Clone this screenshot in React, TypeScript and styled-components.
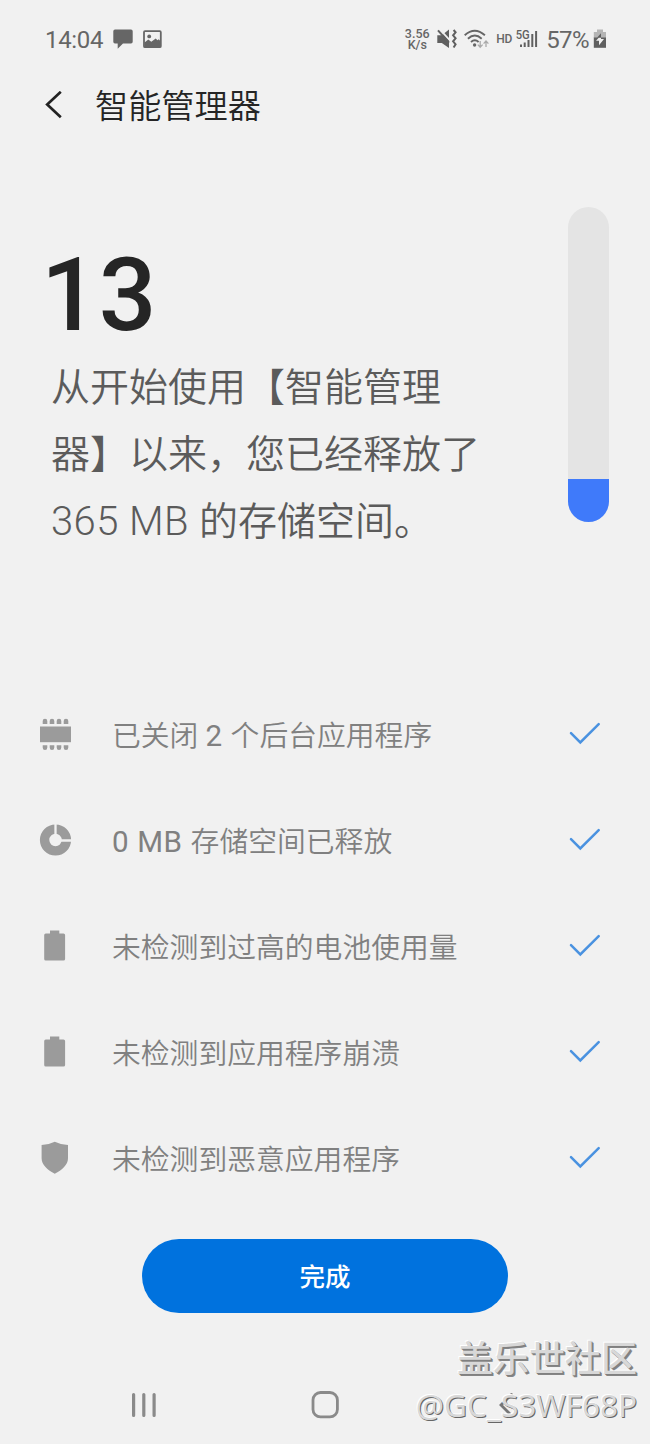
import React from "react";
import styled, { createGlobalStyle } from "styled-components";

const GlobalStyle = createGlobalStyle`
  * { box-sizing: border-box; }
  body { margin: 0; background: #f1f1f1; }
`;

const Screen = styled.div`
  position: relative;
  display: flex;
  flex-direction: column;
  width: 650px;
  height: 1444px;
  overflow: hidden;
  background: #f1f1f1;
  color: #252525;
  font-family: Roboto, "Noto Sans CJK SC", sans-serif;
  white-space: nowrap;
`;

const StatusBar = styled.header`
  display: flex;
  align-items: center;
  justify-content: space-between;
  height: 78px;
  padding: 0 43px 0 45px;
  color: #666;
`;

const StatusGroup = styled.div`
  display: flex;
  align-items: center;
`;

const Clock = styled.span`
  margin-right: 10px;
  font-size: 24px;
  line-height: 28px;
  letter-spacing: -0.35px;
  padding-top: 2px;
`;

const NetSpeed = styled.span`
  display: flex;
  flex-direction: column;
  width: 26px;
  margin-right: 7px;
  font-size: 12.5px;
  font-weight: 500;
  line-height: 11px;
  text-align: center;
`;

const HdLabel = styled.span`
  width: 17px;
  margin: 0 3px 0 7px;
  font-size: 12px;
  font-weight: 500;
  line-height: 14px;
  letter-spacing: -0.2px;
`;

const Battery = styled.span`
  margin: 2px 4px 0 8px;
  font-size: 24px;
  line-height: 28px;
  letter-spacing: -0.6px;
`;

const TitleBar = styled.div`
  display: flex;
  align-items: center;
  height: 54px;
  padding-left: 44px;
`;

const Title = styled.h1`
  margin: 0 0 0 31px;
  padding-bottom: 3px;
  font-family: "Noto Sans CJK SC", sans-serif;
  font-size: 33.2px;
  font-weight: 350;
  line-height: 48px;
`;

const Summary = styled.section`
  display: flex;
  justify-content: space-between;
  height: 550px;
  padding: 75px 41px 0 44px;
`;

const Score = styled.div`
  height: 148px;
  margin-left: -3px;
  padding-top: 28px;
  font-size: 101.5px;
  font-weight: 500;
  line-height: 121px;
`;

const Message = styled.p`
  margin: 0 0 0 7px;
  color: #5b5b5b;
  font-size: 39px;
  font-weight: 350;
  line-height: 67px;
`;

const Amount = styled.span`
  font-size: 40px;
  font-weight: 300;
  line-height: 1;
  letter-spacing: 0.4px;
`;

const Meter = styled.div`
  display: flex;
  flex-direction: column;
  justify-content: flex-end;
  width: 41px;
  height: 315px;
  overflow: hidden;
  border-radius: 21px;
  background: #e4e4e4;
`;

const MeterFill = styled.div`
  height: 43px;
  background: #3f7afa;
`;

const Results = styled.ul`
  margin: 0;
  padding: 0;
  list-style: none;
`;

const ResultRow = styled.li`
  display: flex;
  align-items: center;
  height: 106px;
  padding: 0 48px 0 39px;

  svg {
    margin-bottom: 3px;
  }
`;

const ResultText = styled.span`
  flex: 1;
  margin-left: 40px;
  padding-top: 2px;
  color: #808080;
  font-size: 28.8px;
  font-weight: 350;
  line-height: 42px;
`;

const Count = styled.span`
  font-size: 29.6px;
  font-weight: 400;
  line-height: 1;
  letter-spacing: 0.6px;
`;

const DoneButton = styled.button`
  align-self: center;
  width: 366px;
  height: 74px;
  margin-top: 27px;
  padding: 2px 0 0;
  border: 0;
  border-radius: 37px;
  background: #0072de;
  color: #fff;
  font-family: inherit;
  font-size: 25.5px;
  font-weight: 500;
  line-height: 38px;
`;

const NavBar = styled.nav`
  display: grid;
  grid-template-columns: 181px 181px 181px;
  justify-content: center;
  justify-items: center;
  align-items: center;
  height: 78px;
  margin-top: 53px;
`;

const Watermark = styled.div`
  position: absolute;
  right: 13px;
  bottom: 17px;
  color: #d8d8d8;
  text-align: right;
  font-family: "Noto Sans", "Noto Sans CJK SC", sans-serif;
`;

const CommunityName = styled.div`
  font-size: 36px;
  font-weight: 500;
  line-height: 49px;
  text-shadow: 1px 1px 0 #808080, 2px 2px 0 #858585, -1px -1px 0 #fff;
`;

const UserName = styled.div`
  font-size: 31.5px;
  line-height: 44px;
  text-shadow: 1px 1px 0 #666, -1px -1px 0 #fff;
`;

const ChatIcon = () => (
  <svg width="20" height="20" viewBox="0 0 20 20" fill="#666">
    <path d="M2 0.5h16a1.7 1.7 0 0 1 1.7 1.7v10.6a1.7 1.7 0 0 1-1.7 1.7H10L4.7 19.8v-5.3H2a1.7 1.7 0 0 1-1.7-1.7V2.2A1.7 1.7 0 0 1 2 .5z" />
  </svg>
);

const PhotoIcon = () => (
  <svg width="29" height="19" viewBox="-10 0 29 19">
    <rect x="1" y="1.2" width="16.8" height="16" rx="1" fill="none" stroke="#666" strokeWidth="1.8" />
    <circle cx="6.2" cy="6.4" r="1.9" fill="#666" />
    <path d="M1.5 17v-4.6l3.8-3 3 2.4 4.4-3.2 1.8 1.6 1.2-1 2.2 2.2v5.6z" fill="#666" />
  </svg>
);

const MuteIcon = () => (
  <svg width="20" height="20" viewBox="0 0 20 20">
    <path d="M0.3 6.3h4.5L12 0.4V19l-7.2-5H0.3z" fill="#606060" />
    <path d="M2.4 0l11 11.8" stroke="#f1f1f1" strokeWidth="1.8" />
    <path d="M1 1.4l11 12.2" stroke="#606060" strokeWidth="2" />
    <path d="M16.6 1l2 2.3-2.5 3 2.5 3-2.5 3 2.5 3-2 3.2" fill="none" stroke="#606060" strokeWidth="2" />
  </svg>
);

const WifiIcon = () => (
  <svg width="32" height="20" viewBox="-7 0 32 20">
    <g fill="none" stroke="#666" strokeWidth="1.9">
      <path d="M0.7 6.2Q10.7-2.8 20.9 6.2" />
      <path d="M3.9 9.7Q10.8 3.5 17.7 9.7" />
      <path d="M7 13Q10.8 9.6 14.6 13" />
    </g>
    <circle cx="10.6" cy="16" r="1.7" fill="#666" />
    <path d="M16.2 12v6m-2.4-2.4 2.4 2.6 2.4-2.6M22 18v-6m-2.4 2.6L22 12l2.4 2.6" fill="none" stroke="#aaa" strokeWidth="1.3" />
  </svg>
);

const SignalIcon = () => (
  <svg width="22" height="20" viewBox="0 0 22 20">
    <text x="-0.3" y="10" fill="#606060" fontFamily="Roboto" fontSize="12" fontWeight="500" textLength="14" lengthAdjust="spacingAndGlyphs">5G</text>
    <path d="M5 15.5V18M8.7 13.5V18M12.5 11V18M16.3 5V18M20.1 2V18" stroke="#606060" strokeWidth="2" />
  </svg>
);

const ChargeIcon = () => (
  <svg width="14" height="20" viewBox="0 0 14 20">
    <path d="M4 .5h6v2.4h3v6H.8v-6H4z" fill="#b5b5b5" />
    <path d="M.8 8.5H13v10.3H.8z" fill="#606060" />
    <path d="M8 6.2V10h3L6 16.2v-4.5H3z" fill="#f1f1f1" />
    <path d="M8 4.2v4.5H4z" fill="#606060" />
  </svg>
);

const BackIcon = () => (
  <svg width="20" height="28" viewBox="0 1 20 28">
    <path d="M16.8 1.8 3.2 14.5l13.6 12.7" fill="none" stroke="#222" strokeWidth="2.7" />
  </svg>
);

const MemoryIcon = () => (
  <>
    <rect x="1" y="9.5" width="31" height="15.7" />
    {[6, 13, 20, 27].map((x) => (
      <path
        key={x}
        d={`M${x - 2.3} 7V4.1q0-2.3 2.3-2.3t2.3 2.3v2.9zM${x - 2.3} 28.2h4.6v2.2q0 2.5-2.3 2.5t-2.3-2.5z`}
      />
    ))}
  </>
);

const StorageIcon = () => (
  <>
    <circle cx="16.5" cy="17" r="10.9" fill="none" stroke="#9b9b9b" strokeWidth="9.4" />
    <path d="M16.5 14.5V0M18.5 17.5H33" stroke="#f1f1f1" strokeWidth="2.3" />
  </>
);

const BatteryIcon = () => (
  <path d="M11 1.5h9.3v3h4.2a1.6 1.6 0 0 1 1.6 1.6v23.8a1.6 1.6 0 0 1-1.6 1.6H6.8a1.6 1.6 0 0 1-1.6-1.6V6.1a1.6 1.6 0 0 1 1.6-1.6H11z" />
);

const ShieldIcon = () => (
  <path d="M15.8 0.7Q22 3.8 29 4v13.3c0 6.5-6 11.8-13.2 15.4C8.6 29.1 2.6 23.8 2.6 17.3V4Q9.6 3.8 15.8.7z" />
);

const CheckIcon = () => (
  <svg width="34" height="26" viewBox="0 0 34 26">
    <path d="m3 12.2 9.3 9.3L30.7 3.2" fill="none" stroke="#4a92e0" strokeWidth="2.5" strokeLinecap="round" />
  </svg>
);

const RecentsIcon = () => (
  <svg width="26" height="28" viewBox="0 0 26 28">
    <path d="M2.6 3.5v21M12.8 3.5v21M23.1 3.5v21" stroke="#8a8a8a" strokeWidth="3.2" strokeLinecap="round" />
  </svg>
);

const HomeIcon = () => (
  <svg width="28" height="28" viewBox="0 0 28 28">
    <rect x="2" y="1.5" width="24.4" height="24.4" rx="7.5" fill="none" stroke="#8a8a8a" strokeWidth="2.8" />
  </svg>
);

const NavBackIcon = () => (
  <svg width="18" height="28" viewBox="0 0 18 28">
    <path d="M14.5 3.5 4 14l10.5 10.5" fill="none" stroke="#777" strokeWidth="2.8" strokeLinecap="round" />
  </svg>
);

const results = [
  { icon: <MemoryIcon />, text: <>已关闭 <Count>2 </Count>个后台应用程序</> },
  { icon: <StorageIcon />, text: <><Count>0 MB </Count>存储空间已释放</> },
  { icon: <BatteryIcon />, text: "未检测到过高的电池使用量" },
  { icon: <BatteryIcon />, text: "未检测到应用程序崩溃" },
  { icon: <ShieldIcon />, text: "未检测到恶意应用程序" },
];

export default function App() {
  return (
    <Screen>
      <GlobalStyle />
      <StatusBar>
        <StatusGroup>
          <Clock>14:04</Clock>
          <ChatIcon />
          <PhotoIcon />
        </StatusGroup>
        <StatusGroup>
          <NetSpeed>
            <span>3.56</span>
            <span>K/s</span>
          </NetSpeed>
          <MuteIcon />
          <WifiIcon />
          <HdLabel>HD</HdLabel>
          <SignalIcon />
          <Battery>57%</Battery>
          <ChargeIcon />
        </StatusGroup>
      </StatusBar>
      <TitleBar>
        <BackIcon />
        <Title>智能管理器</Title>
      </TitleBar>
      <Summary>
        <div>
          <Score>13</Score>
          <Message>
            从开始使用【智能管理<br />器】以来，您已经释放了<br />
            <Amount>365 MB </Amount>的存储空间。
          </Message>
        </div>
        <Meter>
          <MeterFill />
        </Meter>
      </Summary>
      <Results>
        {results.map((item, index) => (
          <ResultRow key={index}>
            <svg width="33" height="33" viewBox="0 0 33 33" fill="#9b9b9b">{item.icon}</svg>
            <ResultText>{item.text}</ResultText>
            <CheckIcon />
          </ResultRow>
        ))}
      </Results>
      <DoneButton>完成</DoneButton>
      <NavBar>
        <RecentsIcon />
        <HomeIcon />
        <NavBackIcon />
      </NavBar>
      <Watermark>
        <CommunityName>盖乐世社区</CommunityName>
        <UserName>@GC_S3WF68P</UserName>
      </Watermark>
    </Screen>
  );
}
